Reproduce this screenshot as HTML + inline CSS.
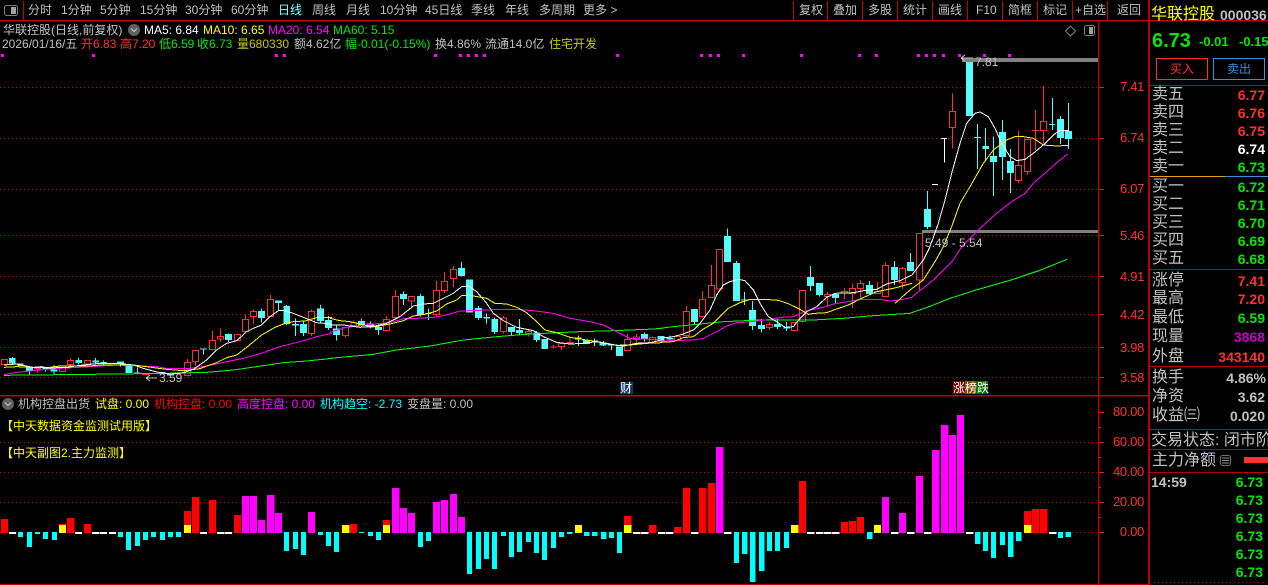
<!DOCTYPE html>
<html lang="zh">
<head>
<meta charset="utf-8">
<title>华联控股</title>
<style>
html,body{margin:0;padding:0;background:#000;}
#p{position:relative;width:1268px;height:585px;overflow:hidden;background:#000;font:12px/14px "Liberation Sans","WenQuanYi Zen Hei","Noto Sans CJK SC",sans-serif;color:#c0c0c0;}
#p span{position:absolute;white-space:nowrap;}
#p svg{position:absolute;left:0;top:0;}
.L{font-size:16px;line-height:18px;}
.V{font-size:14px;font-weight:bold;line-height:16px;right:3px;}
.R{color:#ff3232}.G{color:#00e600}.Y{color:#ffff00}.M{color:#ff00ff}.C{color:#00ffff}.W{color:#fff}.O{color:#c8c800}
.a{color:#ff3232;left:1120px;font-size:13px;letter-spacing:-.3px;}
.b{color:#ff3232;right:124px;font-size:13px;letter-spacing:-.3px;}
</style>
</head>
<body>
<div id="p">
<svg width="1268" height="585" viewBox="0 0 1268 585" shape-rendering="crispEdges" fill="none">
<!-- grid -->
<g stroke="#a00000" stroke-dasharray="1 3">
<path d="M0 87.500H1098M0 138.500H1098M0 189.500H1098M0 235.500H1098M0 276.500H1098M0 314.500H1098M0 347.500H1098M0 377.500H1098M0 442.500H1098M0 472.500H1098M0 502.500H1098M0 532.500H1098M1150 582.500H1268"/>
</g>
<!-- magenta dots -->
<path fill="#ff00ff" d="M1 54h3v3H1zM92 54h3v3h-3zM275 54h3v3h-3zM283 54h3v3h-3zM434 54h3v3h-3zM459 54h3v3h-3zM467 54h3v3h-3zM475 54h3v3h-3zM483 54h3v3h-3zM616 54h3v3h-3zM700 54h3v3h-3zM709 54h3v3h-3zM717 54h3v3h-3zM742 54h3v3h-3zM800 54h3v3h-3zM858 54h3v3h-3zM875 54h3v3h-3zM917 54h3v3h-3zM925 54h3v3h-3zM933 54h3v3h-3zM942 54h3v3h-3zM958 54h3v3h-3zM983 54h3v3h-3zM1008 54h3v3h-3z"/>
<!-- grey levels -->
<path fill="#808080" d="M962 58h136v4H962zM922 230h176v3H922z"/>

<!-- candles section A -->
<g transform="translate(0,250) scale(.33333)" stroke-width="3">
<path stroke="#54fcfc" d="M37 321V344M88 363V376M137 358V365M162 345V372M236 324V343M287 324V340M311 331V346M361 342V350M412 352V374M610 296V314M685 250V276M784 175V218M835 159V182M860 165V225M886 205V258M910 215V258M961 165V218M986 198V240"/>
<path fill="#54fcfc" d="M27 324H47V340H27ZM52 341H70V348H52ZM78 350H99V363H78ZM127 352H147V358H127ZM152 358H172V364H152ZM226 330H246V339H226ZM277 331H297V338H277ZM301 336H321V339H301ZM351 334H372V342H351ZM376 347H397V369H376ZM402 367H422V370H402ZM476 366H497V370H476ZM501 372H522V376H501ZM600 296H621V299H600ZM675 252H696V270H675ZM774 183H795V204H774ZM825 151H846V159H825ZM850 168H870V222H850ZM876 222H897V227H876ZM900 222H921V249H900ZM951 175H972V213H951ZM975 210H996V234H975Z"/>
<path stroke="#ff3232" d="M112 354V368M211 324V352M262 343V350M562 327V380M586 335V348M637 243V302M661 235V276M736 193V250M761 178V222M811 135V200M935 178V258"/>
<path stroke="#ff3232" fill="#000" d="M5 329H22V343H5ZM178 348H196V364H178ZM203 332H220V344H203ZM253 332H271V342H253ZM553 337H571V376H553ZM578 302H595V334H578ZM628 272H646V298H628ZM653 260H670V267H653ZM703 254H721V271H703ZM728 209H745V244H728ZM752 185H770V199H752ZM802 149H820V199H802ZM926 185H944V250H926Z"/>
<path fill="#ff3232" d="M102 354H123V359H102ZM426 372H447V375H426Z"/>
</g>

<!-- candles section B -->
<g transform="translate(330,230) scale(.33333)" stroke-width="3">
<path stroke="#54fcfc" d="M20 285V332M95 265V293M121 274V295M146 287V315M221 185V225M271 192V260M295 235V270M395 96V140M445 228V270M470 250V280M494 262V312M545 291V316M569 267V316M620 303V336M745 316V348M794 326V348M820 333V348M844 342V360M943 308V335M993 318V338"/>
<path fill="#54fcfc" d="M9 295H30V315H9ZM84 273H105V287H84ZM110 281H132V292H110ZM135 291H156V300H135ZM210 192H231V207H210ZM261 198H282V255H261ZM285 249H305V252H285ZM384 114H405V138H384ZM408 148H429V248H408ZM435 234H456V264H435ZM460 261H480V266H460ZM484 267H504V306H484ZM534 291H555V306H534ZM558 300H579V309H558ZM610 307H630V330H610ZM634 327H654V357H634ZM735 322H755V329H735ZM759 330H780V342H759ZM784 332H804V338H784ZM809 338H830V347H809ZM834 344H854V347H834ZM858 350H879V378H858ZM933 312H954V328H933ZM983 318H1003V335H983Z"/>
<path stroke="#ff3232" d="M46 317V323M70 272V290M170 258V305M196 180V270M245 214V236M320 153V258M344 126V189M371 108V171M520 258V310M595 300V320M670 345V356M695 350V360M720 323V340M892 310V362M919 312V340M968 320V340"/>
<path stroke="#ff3232" fill="#000" d="M38 293H55V316H38ZM63 277H79V287H63ZM161 269H178V301H161ZM188 200H205V262H188ZM236 200H253V213H236ZM311 182H328V253H311ZM335 155H352V181H335ZM362 119H379V145H362ZM512 264H529V304H512ZM586 305H604V311H586ZM686 341H704V349H686ZM884 329H901V361H884ZM910 321H928V329H910ZM959 323H976V337H959Z"/>
<path fill="#ff3232" d="M660 349H680V353H660ZM710 336H730V340H710Z"/>
</g>

<!-- candles section C -->
<g transform="translate(660,220) scale(.33333)" stroke-width="3">
<path stroke="#54fcfc" d="M30 347V365M104 267V312M203 25V48M230 123V130M253 216V255M278 243V330M305 297V338M353 297V327M380 306V333M451 138V213M479 189V229M527 222V252M629 183V222M704 123V195M751 99V126"/>
<path fill="#54fcfc" d="M19 354H40V358H19ZM93 267H114V306H93ZM192 48H213V126H192ZM219 129H240V243H219ZM243 239H264V242H243ZM267 270H288V318H267ZM294 315H315V327H294ZM342 312H363V321H342ZM369 323H390V326H369ZM441 171H462V198H441ZM468 189H489V225H468ZM516 222H537V234H516ZM618 195H639V222H618ZM693 141H714V180H693ZM741 126H762V153H741Z"/>
<path stroke="#ff3232" d="M79 258V352M127 213V293M154 135V233M328 306V330M403 307V335M428 210V308M502 216V258M553 204V237M577 192V264M601 180V232M652 186V222M676 126V231M727 141V207"/>
<path stroke="#ff3232" fill="#000" d="M44 350H61V362H44ZM70 275H88V347H70ZM119 239H136V289H119ZM146 197H163V232H146ZM170 89H187V207H170ZM319 314H337V322H319ZM395 308H412V331H395ZM419 211H436V304H419ZM493 224H511V229H493ZM544 214H562V219H544ZM569 206H586V221H569ZM593 191H610V205H593ZM644 214H661V221H644ZM668 137H685V230H668ZM719 146H736V188H719Z"/>
</g>

<!-- candles section D -->
<g transform="translate(900,50) scale(.33333)" stroke-width="3">
<path stroke="#54fcfc" d="M83 423V537M208 36V198M232 222V357M257 234V335M280 260V438M307 210V390M331 297V429M457 144V240M481 198V282M505 159V297"/>
<path fill="#54fcfc" d="M72 477H93V531H72ZM198 36H219V198H198ZM222 261H243V264H222ZM247 288H267V297H247ZM270 318H291V336H270ZM297 246H318V321H297ZM321 333H342V369H321ZM447 222H465V225H447ZM471 207H492V264H471ZM495 243H516V267H495Z"/>
<path stroke="#ff3232" d="M157 130V296M355 243V399M382 267V375M406 180V300M430 108V280M58 550V720"/>
<path stroke="#ff3232" fill="#000" d="M50 551H67V690H50ZM149 185H166V232H149ZM347 346H364V391H347ZM374 268H391V364H374ZM421 214H439V241H421Z"/>
<path fill="#ff3232" d="M396 240H415V243H396Z"/>
<path stroke="#fff" d="M96 403H114M123 265H141M133 265V338"/>
</g>

<!-- MA lines -->
<g stroke-width="3" stroke-linejoin="round">
<g transform="translate(0,250) scale(.33333)">
<polyline stroke="#00ff00" points="12,376 270,373 500,370 620,367 700,360 770,350 850,338 920,333 996,325"/>
<polyline stroke="#ff00ff" points="12,374 50,367 100,362 150,357 200,354 270,350 350,345 400,347 470,350 500,355 570,355 620,348 680,335 730,325 790,308 840,290 900,275 950,260 996,250"/>
<polyline stroke="#ffff00" points="12,352 50,350 100,352 150,352 180,348 270,348 300,345 400,345 440,350 475,355 500,358 550,362 600,356 620,348 650,338 680,323 710,315 740,292 785,255 825,232 850,222 880,215 915,213 950,203 996,203"/>
<polyline stroke="#ffffff" points="12,345 50,342 78,348 100,352 125,350 150,355 180,352 205,352 225,348 250,345 300,340 350,340 400,345 430,355 470,366 510,372 550,368 580,358 620,330 650,300 680,280 710,272 740,245 760,235 785,225 810,200 835,182 850,181 880,190 910,202 950,218 996,222"/>
</g>
<g transform="translate(330,230) scale(.33333)">
<polyline stroke="#00ff00" points="0,385 130,373 200,360 300,348 400,330 500,320 600,312 750,305 850,302 950,298 996,295"/>
<polyline stroke="#ff00ff" points="0,307 50,292 130,282 180,278 225,265 260,265 310,262 350,255 390,243 450,241 505,238 560,238 610,242 670,250 720,265 780,275 820,285 860,305 900,325 996,330"/>
<polyline stroke="#ffff00" points="0,265 30,272 60,275 100,285 135,290 180,282 220,272 250,258 290,252 320,243 350,222 380,210 395,197 420,196 470,205 495,220 530,222 560,232 590,248 620,275 645,300 680,308 720,322 770,330 820,338 860,346 900,345 950,340 996,338"/>
<polyline stroke="#ffffff" points="0,285 40,285 90,292 135,288 170,280 210,260 250,228 280,222 310,220 340,205 370,190 395,170 415,168 440,185 470,220 490,250 520,272 560,292 610,302 640,320 680,337 720,342 760,340 800,335 840,343 880,348 920,340 960,338 996,330"/>
</g>
<g transform="translate(660,220) scale(.33333)">
<polyline stroke="#00ff00" points="0,325 40,320 90,315 190,305 300,300 460,300 550,295 640,287 750,280 810,259 870,235 945,211 1050,181 1140,151 1221,118"/>
<polyline stroke="#ff00ff" points="0,363 100,360 130,355 170,335 200,318 230,308 265,306 330,298 365,292 400,290 440,272 490,262 520,252 580,242 600,238 660,238 690,243 720,240 756,232"/>
<polyline stroke="#ffff00" points="0,367 40,365 70,353 100,350 130,327 160,310 205,265 240,248 270,238 315,238 355,241 385,251 420,268 445,283 465,280 500,278 530,267 565,255 600,237 650,215 700,205 756,190"/>
<polyline stroke="#ffffff" points="0,355 40,350 70,342 100,330 120,310 150,270 170,225 190,195 210,185 235,178 255,182 280,210 300,250 325,290 350,305 375,322 400,320 420,295 440,275 470,260 500,232 525,220 580,218 610,212 650,208 680,192 720,182 756,165"/>
</g>
<g transform="translate(900,50) scale(.33333)">
<polyline stroke="#ff00ff" points="36,741 100,690 160,630 185,590 240,535 290,490 335,455 375,430 400,400 440,365 480,330 503,312"/>
<polyline stroke="#ffff00" points="-15,760 30,720 70,690 108,630 130,590 155,530 180,460 210,410 250,340 280,300 320,270 345,260 370,260 400,265 430,285 470,288 505,286"/>
<polyline stroke="#ffffff" points="36,675 70,630 90,590 115,520 135,450 155,370 180,280 200,220 225,190 240,186 265,200 285,235 305,280 330,320 350,332 375,328 400,310 430,285 460,255 480,241 505,242"/>
</g>
</g>

<!-- price arrows -->
<path stroke="#c0c0c0" d="M961 58L965 55M961 58L965 61M961 58H973M146 378H157M146 378L150 375M146 378L150 381"/>

<!-- lower bars left -->
<g transform="translate(0,395) scale(.35714,.33333)">
<path fill="#ff0000" d="M3 372H22V414H3ZM165 387H185V391H165ZM188 369H208V414H188ZM235 387H255V414H235ZM515 348H535V391H515ZM538 306H558V414H538ZM585 315H605V414H585ZM655 360H675V414H655ZM980 387H1000V414H980ZM1072 375H1092V391H1072Z"/>
<path fill="#ffff00" d="M165 390H185V414H165ZM515 390H535V414H515ZM958 390H978V414H958ZM1072 390H1092V414H1072Z"/>
<path fill="#ffffff" d="M25 411H45V417H25ZM210 411H230V417H210ZM258 411H278V417H258ZM280 411H300V417H280ZM305 411H325V417H305ZM560 411H580V417H560ZM608 411H628V417H608ZM630 411H650V417H630Z"/>
<path fill="#ff00ff" d="M678 303H698V414H678ZM700 303H720V414H700ZM722 375H742V414H722ZM748 300H768V414H748ZM770 354H790V414H770ZM862 351H882V414H862ZM1098 279H1118V414H1098ZM1120 339H1140V414H1120ZM1142 354H1162V414H1142ZM1212 321H1232V414H1212ZM1235 315H1255V414H1235ZM1260 297H1280V414H1260ZM1282 366H1302V414H1282Z"/>
<path fill="#00ffff" d="M50 411H64V426H50ZM76 411H90V456H76ZM98 411H112V417H98ZM120 411H134V432H120ZM146 411H160V435H146ZM330 411H344V426H330ZM353 411H367V465H353ZM378 411H392V453H378ZM400 411H414V435H400ZM423 411H437V426H423ZM448 411H462V435H448ZM470 411H484V426H470ZM493 411H507V426H493ZM795 411H809V468H795ZM820 411H834V462H820ZM843 411H857V480H843ZM890 411H904V420H890ZM913 411H927V453H913ZM935 411H949V471H935ZM1005 411H1019V414H1005ZM1030 411H1044V423H1030ZM1053 411H1067V435H1053ZM1170 411H1184V456H1170ZM1193 411H1207V438H1193ZM1308 411H1322V537H1308ZM1333 411H1347V522H1333ZM1355 411H1369V492H1355ZM1378 411H1392V522H1378ZM1403 411H1417V423H1403ZM1425 411H1439V486H1425ZM1448 411H1462V471H1448ZM1473 411H1487V441H1473ZM1495 411H1509V474H1495ZM1518 411H1532V495H1518ZM1543 411H1557V459H1543Z"/>
</g>
<!-- lower bars right -->
<g transform="translate(560,395) scale(.37628,.33333)">
<path fill="#ff0000" d="M170 363H190V391H170ZM237 390H256V414H237ZM303 396H323V414H303ZM327 279H346V414H327ZM369 279H389V414H369ZM393 264H412V414H393ZM635 258H654V414H635ZM747 381H766V414H747ZM768 378H787V414H768ZM789 366H808V414H789ZM1233 348H1253V391H1233ZM1254 342H1274V414H1254ZM1276 342H1295V414H1276Z"/>
<path fill="#ffff00" d="M40 390H58V414H40ZM170 390H190V414H170ZM614 390H634V414H614ZM834 390H853V414H834ZM1233 390H1253V414H1233Z"/>
<path fill="#ffffff" d="M194 411H214V417H194ZM215 411H235V417H215ZM260 411H280V417H260ZM282 411H302V417H282ZM348 411H368V417H348ZM436 411H456V417H436ZM656 411H676V417H656ZM680 411H700V417H680ZM702 411H722V417H702ZM723 411H743V417H723ZM880 411H900V417H880ZM922 411H942V417H922ZM967 411H987V417H967ZM1079 411H1099V417H1079ZM1299 411H1319V417H1299Z"/>
<path fill="#ff00ff" d="M415 156H434V414H415ZM856 306H874V414H856ZM901 354H920V414H901ZM946 243H965V414H946ZM989 165H1008V414H989ZM1013 90H1032V414H1013ZM1034 120H1053V414H1034ZM1055 60H1074V414H1055Z"/>
<path fill="#00ffff" d="M-3 411H11V426H-3ZM19 411H33V417H19ZM64 411H78V423H64ZM85 411H99V423H85ZM109 411H123V432H109ZM130 411H144V429H130ZM151 411H165V474H151ZM462 411H476V504H462ZM484 411H498V477H484ZM505 411H519V561H505ZM529 411H543V528H529ZM550 411H564V468H550ZM571 411H585V468H571ZM595 411H609V459H595ZM816 411H830V432H816ZM1103 411H1117V447H1103ZM1124 411H1138V468H1124ZM1145 411H1159V489H1145ZM1169 411H1183V450H1169ZM1191 411H1205V486H1191ZM1212 411H1226V438H1212ZM1323 411H1337V429H1323ZM1344 411H1358V426H1344Z"/>
</g>

<!-- frame lines -->
<path fill="#c00000" d="M0 20h1268v1.500H0zM0 395h1150v1.500H0zM0 584h1150v1H0zM23 1h1v19h-1zM793 1h1v19h-1zM827 1h1v19h-1zM862 1h1v19h-1zM897 1h1v19h-1zM932 1h1v19h-1zM967 1h1v19h-1zM1002 1h1v19h-1zM1037 1h1v19h-1zM1072 1h1v19h-1zM1107 1h1v19h-1z"/>
<path fill="#b00000" d="M1098 21h1.500v564H1098zM1148 0h2v585h-2zM1150 85h118v1h-118zM1150 269h118v1h-118zM1150 366h118v1h-118zM1150 429h118v1h-118zM1150 449h118v1h-118zM1150 472h118v1h-118z"/>
<path fill="#e0a020" d="M1150 176h75v1h-75z"/>
<path fill="#3a8fdc" d="M1225 176h43v1h-43z"/>
<!-- axis ticks -->
<path fill="#d02020" d="M1099 87h5v1h-5zM1099 138h5v1h-5zM1099 189h5v1h-5zM1099 235h5v1h-5zM1099 276h5v1h-5zM1099 314h5v1h-5zM1099 347h5v1h-5zM1099 377h5v1h-5zM1099 412h5v1h-5zM1099 442h5v1h-5zM1099 472h5v1h-5zM1099 502h5v1h-5zM1099 532h5v1h-5zM1099 427h2v1h-2zM1099 457h2v1h-2zM1099 487h2v1h-2zM1099 517h2v1h-2z"/>
<!-- tags -->
<path fill="#0f3a66" d="M620 382h13v12h-13z"/>
<path fill="#7a0000" d="M953 381h12v13h-12z"/>
<path fill="#8a4a00" d="M965 381h11v13h-11z"/>
<path fill="#007000" d="M976 381h12v13h-12z"/>
<!-- buttons -->
<path stroke="#ff3232" d="M1156.500 58.500h51v21h-51z"/>
<path stroke="#3a8fdc" d="M1213.500 58.500h51v21h-51z"/>
<!-- icons -->
<g shape-rendering="auto">
<rect x="4.500" y="5.500" width="13" height="10" rx="2" stroke="#808080"/>
<rect x="11" y="7" width="5" height="7" fill="#a0a0a0"/>
<rect x="1084.500" y="25.500" width="10" height="10" rx="2" stroke="#808080"/>
<rect x="1089" y="27" width="4" height="7" fill="#a0a0a0"/>
<path d="M1070.500 26l5 5-5 5-5-5z" stroke="#808080"/>
<circle cx="134" cy="30" r="6" fill="#606060"/>
<path d="M131 28.500l3 3 3-3" stroke="#c0c0c0" stroke-width="1.200"/>
<circle cx="8" cy="404" r="6" fill="#606060"/>
<path d="M5 402.500l3 3 3-3" stroke="#c0c0c0" stroke-width="1.200"/>
<rect x="1220.500" y="455.500" width="10" height="10" rx="2" stroke="#707070"/>
<path d="M1222 458h7M1222 460.500h7M1222 463h7" stroke="#909090"/>
</g>
<path fill="#ff3232" d="M1244 457h24v6h-24z"/>
</svg>

<!-- toolbar -->
<span style="left:28px;top:3px">分时</span>
<span style="left:61px;top:3px">1分钟</span>
<span style="left:100px;top:3px">5分钟</span>
<span style="left:140px;top:3px">15分钟</span>
<span style="left:185px;top:3px">30分钟</span>
<span style="left:231px;top:3px">60分钟</span>
<span style="left:278px;top:3px;color:#80ffff">日线</span>
<span style="left:312px;top:3px">周线</span>
<span style="left:346px;top:3px">月线</span>
<span style="left:380px;top:3px">10分钟</span>
<span style="left:425px;top:3px">45日线</span>
<span style="left:471px;top:3px">季线</span>
<span style="left:505px;top:3px">年线</span>
<span style="left:539px;top:3px">多周期</span>
<span style="left:583px;top:3px">更多 &gt;</span>
<span style="left:799px;top:3px">复权</span>
<span style="left:833px;top:3px">叠加</span>
<span style="left:868px;top:3px">多股</span>
<span style="left:903px;top:3px">统计</span>
<span style="left:938px;top:3px">画线</span>
<span style="left:976px;top:3px">F10</span>
<span style="left:1008px;top:3px">简框</span>
<span style="left:1043px;top:3px">标记</span>
<span style="left:1075px;top:3px">+自选</span>
<span style="left:1117px;top:3px">返回</span>

<!-- info lines -->
<span style="left:3px;top:23px">华联控股(日线,前复权)</span>
<span class="W" style="left:144px;top:23px">MA5: 6.84</span>
<span class="Y" style="left:203px;top:23px">MA10: 6.65</span>
<span class="M" style="left:268px;top:23px">MA20: 6.54</span>
<span class="G" style="left:333px;top:23px">MA60: 5.15</span>
<span style="left:2px;top:37px">2026/01/16/五</span>
<span class="R" style="left:81px;top:37px">开6.83</span>
<span class="R" style="left:120px;top:37px">高7.20</span>
<span class="G" style="left:159px;top:37px">低6.59</span>
<span class="G" style="left:197px;top:37px">收6.73</span>
<span class="O" style="left:237px;top:37px">量680330</span>
<span style="left:294px;top:37px">额4.62亿</span>
<span class="G" style="left:345px;top:37px">幅-0.01(-0.15%)</span>
<span style="left:435px;top:37px">换4.86%</span>
<span style="left:485px;top:37px">流通14.0亿</span>
<span class="O" style="left:549px;top:37px">住宅开发</span>

<!-- chart labels -->
<span style="left:975px;top:55px">7.81</span>
<span style="left:925px;top:236px">5.49 - 5.54</span>
<span style="left:159px;top:371px">3.59</span>
<span class="W" style="left:620px;top:381px">财</span>
<span class="W" style="left:953px;top:381px">涨榜跌</span>

<!-- axis -->
<span class="a" style="top:80px">7.41</span>
<span class="a" style="top:131px">6.74</span>
<span class="a" style="top:182px">6.07</span>
<span class="a" style="top:229px">5.46</span>
<span class="a" style="top:270px">4.91</span>
<span class="a" style="top:308px">4.42</span>
<span class="a" style="top:341px">3.98</span>
<span class="a" style="top:371px">3.58</span>
<span class="b" style="top:405px">80.00</span>
<span class="b" style="top:435px">60.00</span>
<span class="b" style="top:465px">40.00</span>
<span class="b" style="top:495px">20.00</span>
<span class="b" style="top:525px">0.00</span>

<!-- lower header -->
<span style="left:18px;top:397px">机构控盘出货</span>
<span class="Y" style="left:95px;top:397px">试盘: 0.00</span>
<span style="left:154px;top:397px;color:#ff0000">机构控盘: 0.00</span>
<span class="M" style="left:237px;top:397px">高度控盘: 0.00</span>
<span class="C" style="left:320px;top:397px">机构趋空: -2.73</span>
<span style="left:407px;top:397px">变盘量: 0.00</span>
<span class="Y" style="left:1px;top:419px">【中天数据资金监测试用版】</span>
<span class="Y" style="left:1px;top:446px">【中天副图2.主力监测】</span>

<!-- right panel header -->
<span class="Y" style="left:1151px;top:6px;font-size:16px;line-height:18px">华联控股</span>
<span style="left:1220px;top:7px;font-size:14px;line-height:16px;font-weight:bold">000036</span>
<span class="G" style="left:1152px;top:30px;font-size:20px;line-height:23px;font-weight:bold">6.73</span>
<span class="G" style="left:1199px;top:34px;font-size:13px;line-height:16px;font-weight:bold">-0.01</span>
<span class="G" style="left:1239px;top:34px;font-size:13px;line-height:16px;font-weight:bold">-0.15%</span>
<span class="R" style="left:1170px;top:62px">买入</span>
<span style="left:1227px;top:62px;color:#3a8fdc">卖出</span>

<!-- order book -->
<span class="L" style="left:1152px;top:86px">卖五</span><span class="V R" style="top:87px">6.77</span>
<span class="L" style="left:1152px;top:104px">卖四</span><span class="V R" style="top:105px">6.76</span>
<span class="L" style="left:1152px;top:122px">卖三</span><span class="V R" style="top:123px">6.75</span>
<span class="L" style="left:1152px;top:140px">卖二</span><span class="V W" style="top:141px">6.74</span>
<span class="L" style="left:1152px;top:158px">卖一</span><span class="V G" style="top:159px">6.73</span>
<span class="L" style="left:1152px;top:178px">买一</span><span class="V G" style="top:179px">6.72</span>
<span class="L" style="left:1152px;top:196px">买二</span><span class="V G" style="top:197px">6.71</span>
<span class="L" style="left:1152px;top:214px">买三</span><span class="V G" style="top:215px">6.70</span>
<span class="L" style="left:1152px;top:232px">买四</span><span class="V G" style="top:233px">6.69</span>
<span class="L" style="left:1152px;top:250px">买五</span><span class="V G" style="top:251px">6.68</span>
<span class="L" style="left:1152px;top:272px">涨停</span><span class="V R" style="top:273px">7.41</span>
<span class="L" style="left:1152px;top:290px">最高</span><span class="V R" style="top:291px">7.20</span>
<span class="L" style="left:1152px;top:309px">最低</span><span class="V G" style="top:310px">6.59</span>
<span class="L" style="left:1152px;top:328px">现量</span><span class="V" style="top:329px;color:#c000c0">3868</span>
<span class="L" style="left:1152px;top:348px">外盘</span><span class="V R" style="top:349px">343140</span>
<span class="L" style="left:1152px;top:369px">换手</span><span class="V" style="top:370px;right:2px">4.86%</span>
<span class="L" style="left:1152px;top:388px">净资</span><span class="V" style="top:389px">3.62</span>
<span class="L" style="left:1152px;top:407px">收益㈢</span><span class="V" style="top:408px">0.020</span>
<span class="L" style="left:1151px;top:432px">交易状态: 闭市阶段</span>
<span class="L" style="left:1152px;top:452px">主力净额</span>
<span style="left:1151px;top:474px;font-size:14px;line-height:16px;font-weight:bold">14:59</span>
<span class="V G" style="top:474px;right:5px">6.73</span>
<span class="V G" style="top:492px;right:5px">6.73</span>
<span class="V G" style="top:510px;right:5px">6.73</span>
<span class="V G" style="top:528px;right:5px">6.73</span>
<span class="V G" style="top:546px;right:5px">6.73</span>
<span class="V G" style="top:564px;right:5px">6.73</span>
</div>
</body>
</html>
